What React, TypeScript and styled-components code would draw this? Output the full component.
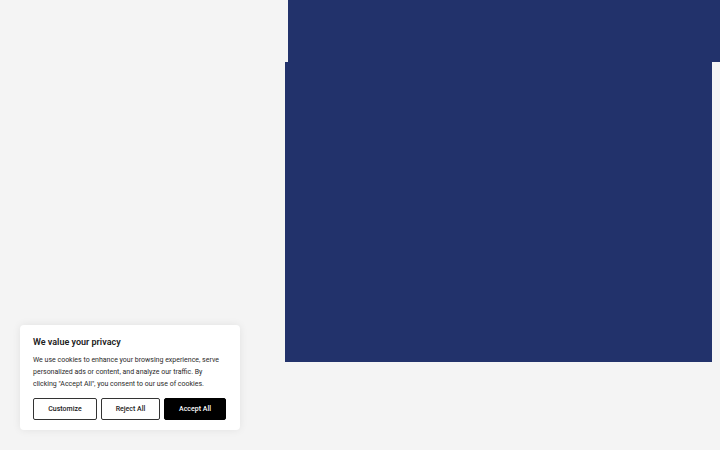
import styled, { createGlobalStyle } from 'styled-components';

const Global = createGlobalStyle`
  html, body {
    margin: 0;
    padding: 0;
    background: #f4f4f4;
    font-family: Roboto, "Liberation Sans", sans-serif;
  }
`;

const Page = styled.div`
  position: relative;
  width: 720px;
  height: 450px;
  overflow: hidden;
  background: #f4f4f4;
`;

const Hero = styled.div`
  display: flex;
  flex-direction: column;
  align-items: flex-start;
  padding-left: 285px;
`;

const Block = styled.div<{ $w: number; $h: number; $shift?: number }>`
  width: ${(p) => p.$w}px;
  height: ${(p) => p.$h}px;
  margin-left: ${(p) => p.$shift ?? 0}px;
  background: #22326b;
`;

const Banner = styled.div`
  position: absolute;
  left: 20px;
  top: 325px;
  width: 220px;
  box-sizing: border-box;
  padding: 10px 13px 10px;
  background: #fff;
  border-radius: 4px;
  box-shadow: 0 0 8px rgba(0, 0, 0, 0.08);
`;

const Title = styled.h2`
  margin: 0 0 5px;
  font-size: 9px;
  font-weight: 600;
  line-height: 14px;
  color: #212121;
`;

const Text = styled.p`
  margin: 0 0 8px;
  font-size: 7px;
  line-height: 12px;
  color: #2a2a2a;
`;

const Actions = styled.div`
  display: flex;
  gap: 4px;
`;

const Btn = styled.button<{ $primary?: boolean; $w: number }>`
  width: ${(p) => p.$w}px;
  height: 22px;
  padding: 0;
  box-sizing: border-box;
  border: 1.5px solid ${(p) => (p.$primary ? '#000' : '#333')};
  border-radius: 2px;
  background: ${(p) => (p.$primary ? '#000' : '#fff')};
  color: ${(p) => (p.$primary ? '#fff' : '#212121')};
  font-family: inherit;
  font-size: 7px;
  font-weight: 500;
  cursor: pointer;
`;

export default function App() {
  return (
    <Page>
      <Global />
      <Hero>
        <Block $w={432} $h={62} $shift={3} />
        <Block $w={427} $h={300} />
      </Hero>
      <Banner>
        <Title>We value your privacy</Title>
        <Text>
          We use cookies to enhance your browsing experience, serve personalized ads or content,
          and analyze our traffic. By clicking "Accept All", you consent to our use of cookies.
        </Text>
        <Actions>
          <Btn $w={64}>Customize</Btn>
          <Btn $w={59}>Reject All</Btn>
          <Btn $w={62} $primary>
            Accept All
          </Btn>
        </Actions>
      </Banner>
    </Page>
  );
}
